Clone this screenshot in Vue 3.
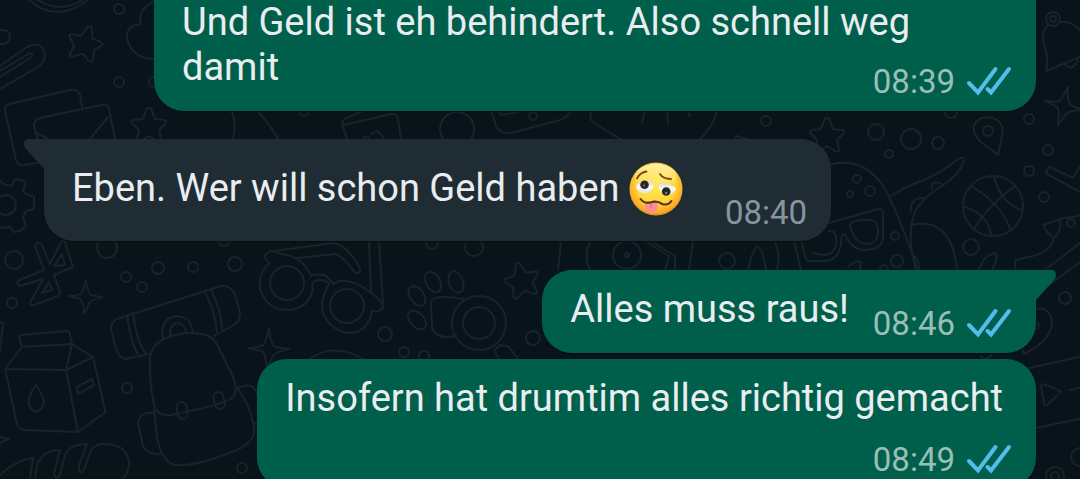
<script setup>
const messages = [
  { id: 1, out: true, cls: 'first', text: 'Und Geld ist eh behindert. Also schnell weg damit', time: '08:39' },
  { id: 2, out: false, cls: 'reply', text: 'Eben. Wer will schon Geld haben', emoji: true, time: '08:40', tail: true },
  { id: 3, out: true, cls: 'short', text: 'Alles muss raus!', time: '08:46', tail: true },
  { id: 4, out: true, cls: 'long', text: 'Insofern hat drumtim alles richtig gemacht', time: '08:49' },
]
const dots = [
  [3, 37, 7], [119, 9, 5], [119, 82, 5], [154, 82, 5],
  [14, 260, 9], [107, 248, 10], [12, 303, 5], [158, 268, 6], [126, 277, 5], [142, 287, 5], [193, 267, 5], [235, 264, 7], [224, 241, 5],
  [127, 388, 5], [242, 468, 5], [267, 468, 7],
  [304, 111, 5], [432, 243, 6], [474, 247, 9], [385, 334, 7], [404, 352, 5], [424, 356, 5], [533, 338, 7],
  [533, 116, 4], [457, 129, 17],
  [766, 121, 5], [876, 132, 8], [911, 139, 10], [938, 143, 6], [889, 154, 4], [951, 112, 6],
  [857, 179, 4], [870, 191, 5], [850, 194, 3], [895, 236, 4], [897, 261, 6], [884, 269, 4], [971, 247, 8],
  [1029, 119, 5], [1048, 150, 5], [1029, 171, 5], [1044, 197, 5], [1071, 223, 4], [1065, 298, 6],
  [988, 131, 5], [727, 261, 8], [627, 255, 14], [627, 255, 2], [1080, 457, 9], [1055, 476, 9], [1055, 476, 4],
  [1053, 19, 7], [1053, 19, 3],
]
</script>

<template>
  <main class="chat">
    <svg class="wallpaper" viewBox="0 0 1080 479" preserveAspectRatio="xMidYMin slice" aria-hidden="true">
      <defs>
        <path id="star" d="M0-18Q2-19 3-15L6-7L15-6Q19-5 16-2L10 4L12 13Q12 17 8 15L0 10L-8 15Q-12 17-12 13L-10 4L-16-2Q-19-5-15-6L-6-7L-3-15Q-2-19 0-18Z" />
        <path id="spark" d="M0-20Q2-3 7-2L20 0Q6 3 4 7L-2 20Q-3 5-7 2L-20-1Q-5-2-4-6Z" />
      </defs>
      <circle v-for="(d, i) in dots" :key="i" :cx="d[0]" :cy="d[1]" :r="d[2]" />
      <use href="#star" transform="translate(85 44) rotate(15)" />
      <use href="#star" transform="translate(149 126)" />
      <use href="#star" transform="translate(522 281) rotate(-14)" />
      <use href="#star" transform="translate(827 136)" />
      <use href="#spark" transform="translate(86 297) scale(.85)" />
      <use href="#spark" transform="translate(269 349)" />
      <use href="#spark" transform="translate(1064 106) rotate(12)" />
      <path d="M29 0Q58 25 90-2M38 0Q60 14 82 0" />
      <path d="M153 2Q137 10 141 24Q126 25 127 39Q132 58 153 59" />
      <path d="M0 66L27 47Q42 40 45 54Q45 62 38 67L0 89M0 77L27 60Q33 57 32 55Q31 51 25 56L0 71" />
      <path d="M37 163L24 165Q18 166 16 160L5 111Q4 106 9 104L70 90Q77 88 80 95L82 107M38 140L34 126Q34 120 40 118L101 105Q107 103 109 109L115 139M35 132L48 139M108 117L90 139" />
      <path d="M0 180Q4 187 13 185L14 180Q22 178 26 183L23 190L26 194L34 197L34 209L26 211L23 217L26 226Q20 232 14 232L10 227L0 228" /><circle cx="6" cy="205" r="10" />
      <path d="M35 246Q37 240 42 245L50 264L60 244Q64 237 66 245L73 267L54 275L60 292L58 296L34 305Q29 306 31 301L43 279L20 286Q15 284 19 280L44 270ZM54 266L62 254L65 265ZM42 293L49 282L52 290Z" />
      <path d="M22 347L19 338Q19 335 22 335L67 331Q70 331 70 335L72 344L93 357L105 410Q106 413 103 414L78 432L24 430Q18 429 17 424L5 369L22 347L72 344L66 370L78 432M5 369L66 370L93 357M77 387L92 379L94 385L78 394ZM36 385Q24 401 32 410Q39 414 43 406Q46 400 36 385Z" />
      <path d="M0 322L3 323L0 351M0 437L9 439L0 443" />
      <path d="M0 475Q16 460 33 458L30 479M35 479L37 465Q43 450 60 450L54 473Q56 482 60 475L65 455Q70 444 87 444L79 465Q78 474 83 472L90 453Q94 444 102 444Q126 443 129 462Q129 474 122 479" />
      <path d="M149 354L126 359Q120 359 116 349L111 329Q111 320 120 318L218 287Q227 283 234 292L240 312Q241 322 232 326L214 336M127 315Q131 345 140 357M133 313Q137 343 146 354M205 292Q215 311 217 332M211 290Q221 309 222 329M163 339Q160 323 170 318Q181 313 190 322L193 332M170 335Q169 326 176 323Q185 323 186 332" />
      <path d="M150 358Q151 345 166 338Q184 331 202 334Q212 335 218 346L233 377Q239 392 232 398Q222 405 171 415Q157 417 154 404Q149 380 150 358ZM154 410L157 438Q162 461 174 465Q196 467 237 450Q255 441 254 430Q253 410 237 388M154 413Q140 411 138 423L143 446Q148 455 160 454M238 388Q252 381 257 393L262 413Q262 420 254 424" />
      <rect x="177" y="402" width="10" height="17" rx="5" transform="rotate(-8 182 410)" /><rect x="214" y="392" width="10" height="17" rx="5" transform="rotate(-12 219 400)" />
      <path d="M231 110Q237 123 233 139M257 110Q272 127 278 139M347 139L342 124Q342 120 347 118L362 111M344 125L391 114Q396 113 398 119L401 139M363 139Q366 133 369 139M372 134Q377 127 384 139M491 110L496 126Q501 136 515 132L560 120Q568 117 571 111M498 110L501 115L524 111M592 111Q587 119 596 124L620 139M645 111L642 122M667 111L668 123M687 111L690 116M717 111Q713 127 700 139M735 139L737 136L750 140" />
      <circle cx="287" cy="283" r="17" /><circle cx="347" cy="306" r="17" />
      <path d="M312 275Q318 274 324 275Q330 278 333 284M311 276Q304 258 283 254L270 251Q263 255 266 260L270 263Q258 271 260 289Q267 310 287 310Q309 309 313 289Q310 280 319 280Q327 280 329 284Q315 309 330 324Q344 337 359 331Q370 325 372 311Q382 313 383 306Q381 299 368 291Q354 279 339 281L333 284M273 251L334 243Q348 246 360 268Q361 274 355 273Q344 257 336 254L298 258M369 241L371 292M379 241L383 303" />
      <g><ellipse cx="433" cy="282" rx="7" ry="11" transform="rotate(-27 433 282)" /><ellipse cx="456" cy="282" rx="7" ry="11" transform="rotate(-20 456 282)" /><ellipse cx="417" cy="296" rx="7" ry="11" transform="rotate(-36 417 296)" /><ellipse cx="417" cy="320" rx="7" ry="11" transform="rotate(-43 417 320)" /></g>
      <path d="M465 299Q430 293 431 304L432 328Q437 340 454 336M500 346Q493 349 496 354L500 360M500 345L508 346L519 360M308 360Q334 341 365 360" /><circle cx="479" cy="323" r="27" /><circle cx="479" cy="323" r="16" />
      <path d="M561 241L558 270M590 241Q583 256 590 270M645 241L669 256L665 270M651 241L675 256L675 270M693 241L689 270M748 270Q752 251 757 247Q763 248 766 270M774 241Q781 252 777 270M794 241L801 270" />
      <path d="M829 165Q862 155 884 187Q899 215 918 270M829 223L878 209Q884 208 883 216L883 236Q884 249 866 250Q852 250 845 235Q841 231 841 243Q839 260 825 261L807 261Q804 253 801 240M829 231Q838 230 836 245Q834 254 825 255L812 253M850 227Q850 219 868 220Q876 218 878 229Q879 244 866 244Q855 243 850 227ZM891 196Q905 187 921 181Q940 174 958 159Q965 155 963 163Q959 176 937 189Q914 205 912 222Q908 242 916 270M911 225Q952 216 957 270M912 254Q921 261 919 270M911 211Q910 198 923 198M932 189Q931 179 942 184" />
      <circle cx="993" cy="206" r="30" /><path d="M994 176Q1000 202 1021 210M973 187Q1003 206 1010 229M1015 186Q988 205 974 229M965 207Q988 214 991 235" />
      <path d="M1048 25Q1040 34 1044 45Q1049 58 1046 71L1080 57M1060 22Q1072 20 1082 33M1065 64Q1071 73 1078 60" />
      <path d="M998 155L981 142Q972 133 974 125Q979 115 993 118Q1005 123 1002 135ZM979 270Q984 254 996 253Q998 259 992 270M848 267Q856 260 861 262L860 270M1084 160L1073 178L1050 167Q1045 170 1047 174L1080 192M1043 225L1064 218Q1080 217 1088 211M1044 225Q1044 231 1054 238Q1062 230 1060 220M1054 238Q1050 254 1028 257L1016 260Q1014 264 1016 270M1041 273L1088 237M1041 291L1088 256M1036 309Q1051 306 1052 324Q1050 341 1024 354L1022 348M1036 329Q1041 326 1038 323M1020 370L1088 355M1036 428L1088 417M1041 386Q1041 383 1046 385L1060 391Q1062 392 1059 394L1047 405Q1045 406 1044 403ZM1070 390L1088 386M981 356Q985 363 992 354" />
    </svg>

    <article v-for="m in messages" :key="m.id" :class="['bubble', m.out ? 'out' : 'in', m.cls]">
      <svg v-if="m.tail" class="tail" viewBox="0 0 22 32" aria-hidden="true"><path d="M0 0H15Q20 0 20 5Q20 8 18 10L0 30Z" /></svg>
      <p class="text">{{ m.text }}
        <svg v-if="m.emoji" class="emoji" viewBox="0 0 54 54" role="img" aria-label="Woozy face">
          <defs>
            <radialGradient id="skin" cx=".5" cy=".42" r=".6"><stop offset="0" stop-color="#ffe94f" /><stop offset=".6" stop-color="#ffd63d" /><stop offset=".88" stop-color="#fba724" /><stop offset="1" stop-color="#de7a1c" /></radialGradient>
            <linearGradient id="shine" x2="0" y2="1"><stop offset="0" stop-color="#fff8c8" stop-opacity=".8" /><stop offset="1" stop-color="#fff080" stop-opacity="0" /></linearGradient>
            <linearGradient id="eye" x2="0" y2="1"><stop offset="0" stop-color="#d5d8d8" /><stop offset=".5" stop-color="#fbfbfa" /><stop offset="1" stop-color="#e3e1d8" /></linearGradient>
          </defs>
          <circle cx="27" cy="27" r="26.5" fill="url(#skin)" /><ellipse cx="27" cy="15" rx="21" ry="13" fill="url(#shine)" />
          <path d="M8 16.500Q11 10.500 17.500 9.500M31 12Q34 17 42 17" fill="none" stroke="#76451a" stroke-width="1.800" stroke-linecap="round" />
          <path d="M7 24Q8 20 14 19.500L23 19Q25.500 24 23 28Q19 32.500 13 31Q7.500 29 7 24Z" fill="url(#eye)" />
          <path d="M30 21Q36 19.500 46 25Q48 27 45 30Q41 34 36 33Q29 30 30 21Z" fill="url(#eye)" />
          <circle cx="15.500" cy="22.800" r="4.300" fill="#292724" /><circle cx="37.200" cy="29.500" r="4.300" fill="#292724" />
          <circle cx="15" cy="23.500" r="1" fill="#777" /><circle cx="37.200" cy="31" r="1.200" fill="#777" />
          <path d="M16 39.500Q22 39 29 39.500L28.500 46Q27 50.500 22 50.500Q16.500 50 16 45Z" fill="#fa8d98" /><path d="M22 42V46" stroke="#d76379" stroke-width="1" />
          <path d="M11.500 37Q16 43 25 39.500Q30 39.500 33 42Q39 44 42.500 39" fill="none" stroke="#55350d" stroke-width="2" stroke-linecap="round" />
        </svg>
      </p>
      <footer class="meta">
        <time>{{ m.time }}</time>
        <svg v-if="m.out" class="ticks" viewBox="0 0 46 28" role="img" aria-label="Read"><path d="M3 15L12 24.500L29.500 1M21.500 21L25 24.500L43 1" /></svg>
      </footer>
    </article>
  </main>
</template>

<style>
body { background: #09141a; overflow: hidden; }
</style>

<style scoped>
.chat {
  position: relative;
  display: flex;
  flex-direction: column;
  box-sizing: border-box;
  height: 100vh;
  padding: 0 44px;
  overflow: hidden;
  background: #09141a;
  font-family: Roboto, "Liberation Sans", sans-serif;
}
.wallpaper {
  position: absolute;
  inset: 0;
  width: 100%;
  height: 100%;
  fill: none;
  stroke: #17242a;
  stroke-width: 2;
  stroke-linecap: round;
  stroke-linejoin: round;
}
.bubble {
  position: relative;
  display: flex;
  flex: none;
  box-sizing: border-box;
  max-width: 882px;
  border-radius: 30px;
  color: #e9edef;
  box-shadow: 0 1px 1px #060e12;
}
.out { align-self: flex-end; padding: 0 24px 0 28px; background: #005f4b; }
.in { align-self: flex-start; padding: 0 24px 0 28px; background: #202c33; }
.text { margin: 0; font-size: 38px; line-height: 45px; }
.meta {
  display: flex;
  flex: none;
  align-items: center;
  align-self: flex-end;
  gap: 11px;
  color: #99bfb7;
  font-size: 33px;
  line-height: 40px;
}
.in .meta { color: #8696a0; }
.ticks { width: 46px; height: 28px; overflow: visible; fill: none; stroke: #53bdeb; stroke-width: 4; stroke-linecap: round; }
.first { flex-direction: column; padding-bottom: 9px; border-radius: 0 0 30px 30px; }
.first .meta { margin-top: -28px; }
.reply { gap: 42px; margin-top: 28px; padding-top: 27px; padding-bottom: 8px; border-top-left-radius: 0; }
.reply .text { padding-bottom: 20px; }
.short { gap: 24px; margin-top: 29px; padding-top: 17px; padding-bottom: 9px; border-top-right-radius: 0; }
.short .text { padding-bottom: 12px; }
.long { flex-direction: column; margin-top: 6px; padding-top: 17px; padding-bottom: 8px; }
.long .text { padding: 0 9px 19px 0; }
.emoji { width: 54px; height: 54px; margin: -6px 0 -3px; vertical-align: middle; }
.tail { position: absolute; top: 0; left: 100%; width: 22px; height: 32px; fill: #005f4b; }
.in .tail { right: 100%; left: auto; fill: #202c33; transform: scaleX(-1); }
</style>
